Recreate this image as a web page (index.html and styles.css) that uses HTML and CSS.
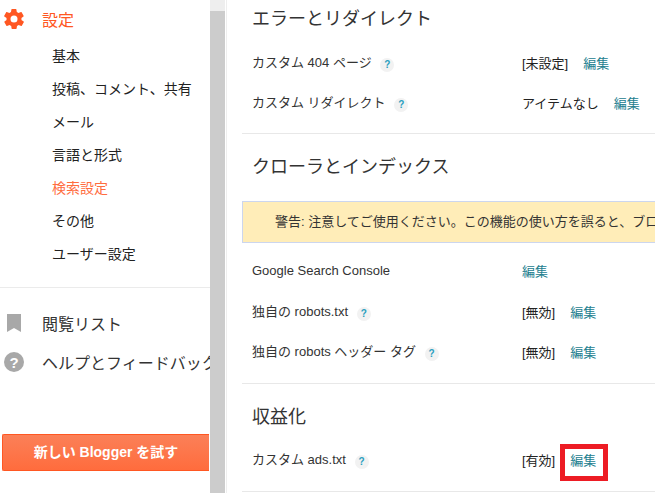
FILE: index.html
```html
<!DOCTYPE html>
<html lang="ja">
<head>
<meta charset="utf-8">
<title>検索設定</title>
<link rel="stylesheet" href="styles.css">
</head>
<body>
<div class="page">
  <aside class="sidebar">
    <div class="nav-main nav-active">
      <svg class="nav-icon" viewBox="2 2 20 20"><path fill="#ff5722" fill-rule="evenodd" d="M19.4 13c.1-.3.1-.7.1-1s0-.7-.1-1l2.100-1.600c.2-.2.2-.4.1-.6l-2-3.500c-.1-.2-.4-.3-.6-.2l-2.500 1c-.5-.4-1.100-.7-1.700-1l-.4-2.600c0-.3-.2-.5-.5-.5h-4c-.3 0-.5.2-.5.500l-.4 2.600c-.6.3-1.200.6-1.700 1l-2.500-1c-.2-.1-.5 0-.6.2l-2 3.500c-.1.2-.1.5.1.6L4.600 11c-.1.300-.1.700-.1 1s0 .7.1 1l-2.100 1.600c-.2.2-.2.4-.1.6l2 3.500c.1.2.4.300.6.200l2.500-1c.5.4 1.100.7 1.700 1l.4 2.600c0 .3.2.5.5.5h4c.3 0 .5-.2.5-.5l.4-2.600c.6-.3 1.200-.6 1.700-1l2.500 1c.2.1.5 0 .6-.2l2-3.500c.1-.2.1-.5-.1-.6L19.400 13zM12 15.500a3.500 3.500 0 1 1 0-7 3.500 3.500 0 0 1 0 7z"/></svg>
      <span>設定</span>
    </div>
    <ul class="subnav">
      <li>基本</li>
      <li>投稿、コメント、共有</li>
      <li>メール</li>
      <li>言語と形式</li>
      <li class="sub-active">検索設定</li>
      <li>その他</li>
      <li>ユーザー設定</li>
    </ul>
    <hr class="side-rule">
    <div class="nav-main nav-list">
      <svg class="nav-icon" viewBox="0 0 20 20"><path fill="#a8a8a8" d="M3 1h14v18l-7-4-7 4z"/></svg>
      <span>閲覧リスト</span>
    </div>
    <div class="nav-main nav-help">
      <svg class="nav-icon" viewBox="0 0 20 20"><circle cx="10" cy="10" r="10" fill="#a8a8a8"/><text x="10" y="15.500" text-anchor="middle" class="help-glyph">?</text></svg>
      <span class="nowrap">ヘルプとフィードバック</span>
    </div>
    <div class="try-button">新しい Blogger を試す</div>
  </aside>
  <div class="scrollbar"><div class="scroll-cap"></div></div>
  <main class="content">
    <section class="block block-first">
      <h2>エラーとリダイレクト</h2>
      <div class="row row-a"><div class="label">カスタム 404 ページ <span class="hint">?</span></div><div class="value">[未設定]<a class="edit">編集</a></div></div>
      <div class="row row-b"><div class="label">カスタム リダイレクト <span class="hint">?</span></div><div class="value">アイテムなし<a class="edit">編集</a></div></div>
    </section>
    <section class="block block-crawl">
      <h2>クローラとインデックス</h2>
      <div class="notice">警告: 注意してご使用ください。この機能の使い方を誤ると、ブログが検索エンジンから除外される場合があります。</div>
      <div class="row row-c"><div class="label">Google Search Console</div><div class="value"><a class="edit edit-only">編集</a></div></div>
      <div class="row row-d"><div class="label">独自の robots.txt <span class="hint">?</span></div><div class="value">[無効]<a class="edit">編集</a></div></div>
      <div class="row row-d"><div class="label">独自の robots ヘッダー タグ <span class="hint">?</span></div><div class="value">[無効]<a class="edit">編集</a></div></div>
    </section>
    <section class="block block-money">
      <h2>収益化</h2>
      <div class="row row-e"><div class="label">カスタム ads.txt <span class="hint">?</span></div><div class="value">[有効]<a class="edit edit-marked">編集<span class="marker"></span></a></div></div>
    </section>
  </main>
</div>
</body>
</html>
```
FILE: styles.css
```css
* { box-sizing: border-box; }
html, body { margin: 0; height: 100%; overflow: hidden; background: #fff; }
body {
  font-family: "Liberation Sans", Arial, "Noto Sans CJK JP", sans-serif;
  color: #222;
}
.page { display: flex; width: 655px; height: 493px; overflow: hidden; }

.sidebar { width: 210px; flex: none; overflow: hidden; padding-top: 3px; }
.nav-main {
  display: flex;
  align-items: center;
  height: 32px;
  font-size: 16px;
  white-space: nowrap;
  padding-left: 4px;
  gap: 18px;
  color: #333;
}
.nav-icon { width: 20px; height: 20px; flex: none; }
.nav-active { color: #ff5722; }
.nowrap { white-space: nowrap; }
.subnav { list-style: none; margin: 5px 0 0; padding: 0 0 0 52px; }
.subnav li { height: 33px; line-height: 32px; font-size: 14px; color: #222; white-space: nowrap; }
.subnav .sub-active { color: #ff6d3f; }
.side-rule { border: 0; border-top: 1px solid #ebebeb; margin: 16px 0 0; }
.nav-list { margin-top: 19px; }
.nav-help { margin-top: 7px; }
.help-glyph { font: bold 15px "Liberation Sans", sans-serif; fill: #fff; }
.try-button {
  margin: 56px 1px 0 2px;
  height: 37px;
  line-height: 35px;
  text-align: center;
  font-size: 14px;
  font-weight: bold;
  color: #fff;
  background: linear-gradient(#fb8058, #ff6c3d);
  border: 1px solid #ff5722;
  border-right: 0;
  border-radius: 2px 0 0 2px;
}

.scrollbar { width: 15px; flex: none; background: #ccc; margin-right: 1px; }
.scroll-cap { height: 11px; background: #eee; }

.content { flex: 1; min-width: 0; border-left: 1px solid #eee; padding-left: 15px; overflow: hidden; }
.block { border-bottom: 1px solid #e8e8e8; }
.block h2 {
  margin: 0;
  padding-left: 10px;
  font-size: 18px;
  font-weight: normal;
  line-height: 26px;
  color: #333;
  white-space: nowrap;
}
.block-first { height: 134px; padding-top: 6px; }
.block-crawl { height: 250px; padding-top: 20px; }
.block-money { height: 108px; padding-top: 20px; }

.row { display: flex; align-items: center; height: 40px; font-size: 13px; white-space: nowrap; }
.label { width: 280px; flex: none; padding-left: 10px; color: #333; font-size: 13px; }
.value { color: #222; }
.row-a { margin-top: 10px; }
.row-c { margin-top: 7px; height: 41px; }
.row-e { margin-top: 9px; }
.row-d { height: 40px; }

.hint {
  display: inline-block;
  width: 14px;
  height: 14px;
  margin-left: 5px;
  border-radius: 50%;
  background: #f2f2f2;
  color: #2b9fbf;
  font-size: 10px;
  font-weight: bold;
  line-height: 14px;
  text-align: center;
  vertical-align: -1px;
}
.edit { color: #23808f; margin-left: 15px; position: relative; }
.edit-only { margin-left: 0; }
.marker {
  position: absolute;
  left: -10px;
  top: -9px;
  width: 48px;
  height: 37px;
  border: 5px solid #ed1c24;
}

.notice {
  margin-top: 21px;
  height: 42px;
  line-height: 40px;
  width: 600px;
  padding-left: 32px;
  font-size: 13px;
  color: #333;
  white-space: nowrap;
  overflow: hidden;
  background: #ffedb8;
  border: 1px solid #ccd6ee;
}
```
